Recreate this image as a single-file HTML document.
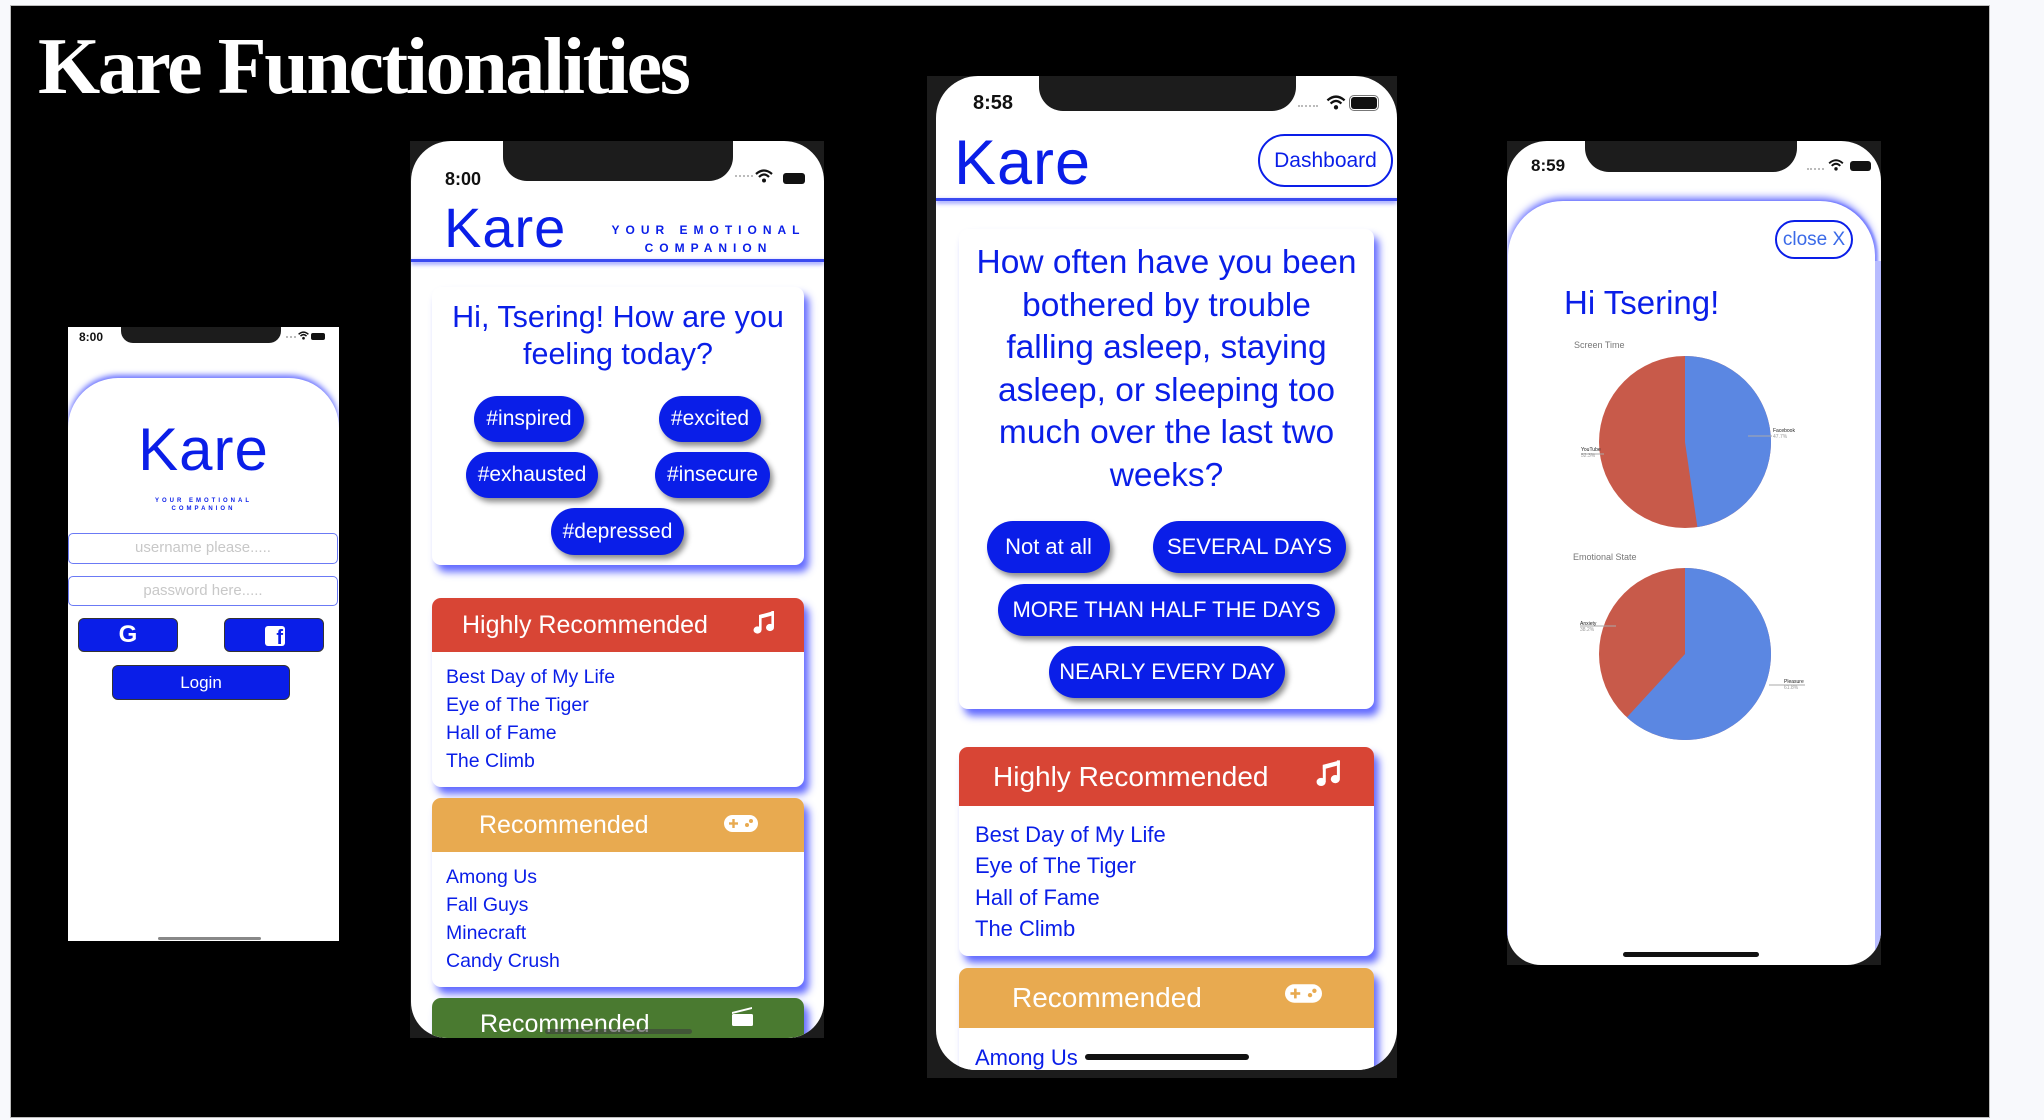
<!DOCTYPE html>
<html><head><meta charset="utf-8">
<style>
*{margin:0;padding:0;box-sizing:border-box}
body{width:2044px;height:1120px;background:#f8f9fc;position:relative;overflow:hidden;font-family:"Liberation Sans",sans-serif}
.abs{position:absolute}
.blk{left:11px;top:6px;width:1978px;height:1111px;background:#000;outline:1px solid #bbb}
.title{left:38px;top:22px;font-family:"Liberation Serif",serif;font-weight:bold;font-size:80px;color:#fff;letter-spacing:-2.4px;white-space:nowrap}
.frame{background:#1c1c1c}
.scr{background:#fff;overflow:hidden}
.blue{color:#0a1ee8}
.logo{font-family:"DejaVu Sans ExtraLight","Liberation Sans",sans-serif;font-weight:200}
.notch{background:#1c1c1c;border-radius:0 0 24px 24px}
.st{font-weight:bold;color:#111}
.card{background:#fff;border-radius:9px;box-shadow:5px 7px 8px rgba(70,80,255,.85);overflow:hidden}
.pill{position:absolute;background:#0a1ee8;color:#fff;border-radius:30px;display:flex;align-items:center;justify-content:center;box-shadow:3px 4px 6px rgba(0,0,0,.45);white-space:nowrap}
.hdr{position:absolute;left:0;top:0;width:100%;color:#fff;display:flex;align-items:center}
.item{position:absolute;color:#0a1ee8;white-space:nowrap}
.line{background:#3a4af0;box-shadow:0 2px 4px rgba(60,70,255,.7)}
</style></head><body>
<div class="abs blk"></div>
<div class="abs title">Kare Functionalities</div>

<!-- PHONE 1 -->
<div class="abs scr" style="left:68px;top:327px;width:271px;height:614px">
  <div class="abs st" style="left:11px;top:3px;font-size:12px">8:00</div>
  <div class="abs notch" style="left:53px;top:0;width:160px;height:16px;border-radius:0 0 12px 12px"></div>
  <div class="abs" style="left:218px;top:9px;width:10px;height:2px;border-top:2px dotted #bbb"></div>
  <svg class="abs" style="left:230px;top:4px" width="11" height="9" viewBox="0 0 18 14"><path d="M1 5 Q9 -2 17 5" stroke="#111" stroke-width="2.5" fill="none"/><path d="M4 8 Q9 3 14 8" stroke="#111" stroke-width="2.5" fill="none"/><circle cx="9" cy="11.5" r="2.2" fill="#111"/></svg>
  <div class="abs" style="left:243px;top:6px;width:14px;height:7px;background:#111;border-radius:2px"></div>
  <div class="abs" style="left:0;top:51px;width:271px;height:600px;border-radius:50px 50px 0 0;box-shadow:0 -3px 6px rgba(70,80,255,.8)"></div>
  <div class="abs blue logo" style="left:0;width:271px;text-align:center;top:88px;font-size:60px;line-height:70px;letter-spacing:1px">Kare</div>
  <div class="abs blue" style="left:0;width:271px;text-align:center;top:170px;font-size:6px;font-weight:bold;letter-spacing:3px;line-height:8px">YOUR EMOTIONAL<br>COMPANION</div>
  <div class="abs" style="left:0;top:206px;width:270px;height:31px;border:1.5px solid #6b7af5;border-radius:5px;color:#c8c8c8;font-size:15px;text-align:center;line-height:28px">username please.....</div>
  <div class="abs" style="left:0;top:249px;width:270px;height:30px;border:1.5px solid #6b7af5;border-radius:5px;color:#c8c8c8;font-size:15px;text-align:center;line-height:27px">password here.....</div>
  <div class="abs" style="left:10px;top:291px;width:100px;height:34px;background:#0a1ee8;border:1px solid #333;border-radius:6px;color:#fff;font-weight:bold;font-size:24px;text-align:center;line-height:32px">G</div>
  <div class="abs" style="left:156px;top:291px;width:100px;height:34px;background:#0a1ee8;border:1px solid #333;border-radius:6px">
    <div class="abs" style="left:40px;top:7px;width:20px;height:20px;background:#fff;border-radius:3px;color:#0a1ee8;font-weight:bold;font-size:20px;line-height:24px;text-align:right;padding-right:2px;overflow:hidden">f</div>
  </div>
  <div class="abs" style="left:44px;top:338px;width:178px;height:35px;background:#0a1ee8;border:1px solid #333;border-radius:6px;color:#fff;font-size:17px;text-align:center;line-height:33px">Login</div>
  <div class="abs" style="left:90px;top:610px;width:103px;height:3px;background:#888;border-radius:2px"></div>
</div>

<!-- PHONE 2 -->
<div class="abs frame" style="left:410px;top:141px;width:414px;height:897px"></div>
<div class="abs scr" style="left:411px;top:141px;width:413px;height:897px;border-radius:40px 40px 36px 36px">
  <div class="abs st" style="left:34px;top:28px;font-size:18px">8:00</div>
  <div class="abs notch" style="left:92px;top:0;width:230px;height:40px"></div>
  <div class="abs" style="left:324px;top:34px;width:18px;height:3px;border-top:2px dotted #bbb"></div>
  <svg class="abs" style="left:344px;top:28px" width="18" height="14" viewBox="0 0 18 14"><path d="M1 5 Q9 -2 17 5" stroke="#111" stroke-width="2.2" fill="none"/><path d="M4 8 Q9 3 14 8" stroke="#111" stroke-width="2.2" fill="none"/><circle cx="9" cy="11.5" r="2" fill="#111"/></svg>
  <div class="abs" style="left:372px;top:32px;width:22px;height:11px;background:#111;border-radius:3px"></div>
  <div class="abs blue logo" style="left:33px;top:51px;font-size:56px;line-height:72px;letter-spacing:1px">Kare</div>
  <div class="abs blue" style="left:200px;top:80px;width:195px;text-align:center;font-size:12px;font-weight:bold;letter-spacing:6px;line-height:18px">YOUR EMOTIONAL<br>COMPANION</div>
  <div class="abs line" style="left:0;top:118px;width:413px;height:3px"></div>
  <div class="abs card" style="left:21px;top:146px;width:372px;height:278px">
    <div class="abs blue" style="left:0;top:12px;width:372px;text-align:center;font-size:30.5px;line-height:37px">Hi, Tsering! How are you<br>feeling today?</div>
    <div class="pill" style="left:42px;top:109px;width:110px;height:46px;font-size:21px">#inspired</div>
    <div class="pill" style="left:227px;top:109px;width:102px;height:46px;font-size:21px">#excited</div>
    <div class="pill" style="left:34px;top:165px;width:132px;height:46px;font-size:21px">#exhausted</div>
    <div class="pill" style="left:223px;top:165px;width:115px;height:46px;font-size:21px">#insecure</div>
    <div class="pill" style="left:119px;top:221px;width:133px;height:47px;font-size:21px">#depressed</div>
  </div>
  <div class="abs card" style="left:21px;top:457px;width:372px;height:189px">
    <div class="hdr" style="height:54px;background:#d84535;font-size:25px;padding-left:30px">Highly Recommended</div>
    <svg class="abs" style="left:321px;top:12px" width="22" height="26" viewBox="0 0 22 26"><path d="M6 5 L21 1 L21 5 L6 9 Z" fill="#fff"/><rect x="6" y="5" width="2.6" height="15" fill="#fff"/><rect x="18.4" y="1" width="2.6" height="16" fill="#fff"/><ellipse cx="4.5" cy="20" rx="4" ry="3.6" fill="#fff"/><ellipse cx="17" cy="17.5" rx="4" ry="3.6" fill="#fff"/></svg>
    <div class="item" style="left:14px;top:68px;font-size:19.5px">Best Day of My Life</div>
    <div class="item" style="left:14px;top:96px;font-size:19.5px">Eye of The Tiger</div>
    <div class="item" style="left:14px;top:124px;font-size:19.5px">Hall of Fame</div>
    <div class="item" style="left:14px;top:152px;font-size:19.5px">The Climb</div>
  </div>
  <div class="abs card" style="left:21px;top:657px;width:372px;height:189px">
    <div class="hdr" style="height:54px;background:#e8aa50;font-size:25px;padding-left:47px">Recommended</div>
    <svg class="abs" style="left:292px;top:17px" width="34" height="17" viewBox="0 0 34 17"><rect x="0" y="0" width="34" height="17" rx="8.5" fill="#fff"/><rect x="5" y="7.3" width="9" height="2.4" fill="#e8aa50"/><rect x="8.3" y="4" width="2.4" height="9" fill="#e8aa50"/><circle cx="23" cy="10" r="2" fill="#e8aa50"/><circle cx="27" cy="6" r="2" fill="#e8aa50"/></svg>
    <div class="item" style="left:14px;top:68px;font-size:19.5px">Among Us</div>
    <div class="item" style="left:14px;top:96px;font-size:19.5px">Fall Guys</div>
    <div class="item" style="left:14px;top:124px;font-size:19.5px">Minecraft</div>
    <div class="item" style="left:14px;top:152px;font-size:19.5px">Candy Crush</div>
  </div>
  <div class="abs card" style="left:21px;top:857px;width:372px;height:100px">
    <div class="hdr" style="height:54px;background:#4a7a30;font-size:25px;padding-left:48px;align-items:flex-start;padding-top:12px">Recommended</div>
    <svg class="abs" style="left:299px;top:8px" width="22" height="20" viewBox="0 0 22 20"><path d="M1 6 L21 1 L21 3 L1 8 Z" fill="#fff"/><rect x="1" y="8" width="21" height="12" rx="1.5" fill="#fff"/></svg>
  </div>
  <div class="abs" style="left:134px;top:888px;width:147px;height:5px;background:rgba(60,60,60,.6);border-radius:3px"></div>
</div>

<!-- PHONE 3 -->
<div class="abs frame" style="left:927px;top:76px;width:470px;height:1002px"></div>
<div class="abs scr" style="left:936px;top:76px;width:461px;height:994px;border-radius:42px 42px 40px 40px">
  <div class="abs st" style="left:37px;top:16px;font-size:20px">8:58</div>
  <div class="abs notch" style="left:103px;top:0;width:257px;height:35px"></div>
  <div class="abs" style="left:362px;top:29px;width:20px;height:3px;border-top:2px dotted #bbb"></div>
  <svg class="abs" style="left:390px;top:19px" width="20" height="15" viewBox="0 0 18 14"><path d="M1 5 Q9 -2 17 5" stroke="#111" stroke-width="2.2" fill="none"/><path d="M4 8 Q9 3 14 8" stroke="#111" stroke-width="2.2" fill="none"/><circle cx="9" cy="11.5" r="2" fill="#111"/></svg>
  <div class="abs" style="left:415px;top:21px;width:26px;height:12px;background:#111;border-radius:3px;outline:1px solid #777;outline-offset:1px"></div>
  <div class="abs blue logo" style="left:18px;top:46px;font-size:63px;line-height:82px;letter-spacing:1px">Kare</div>
  <div class="abs blue" style="left:322px;top:58px;width:135px;height:53px;border:2px solid #0a1ee8;border-radius:27px;font-size:21px;text-align:center;line-height:49px">Dashboard</div>
  <div class="abs line" style="left:0;top:122px;width:461px;height:3px"></div>
  <div class="abs card" style="left:23px;top:153px;width:415px;height:480px">
    <div class="abs blue" style="left:0;top:13px;width:415px;text-align:center;font-size:33.5px;line-height:42.6px;white-space:nowrap">How often have you been<br>bothered by trouble<br>falling asleep, staying<br>asleep, or sleeping too<br>much over the last two<br>weeks?</div>
    <div class="pill" style="left:28px;top:292px;width:123px;height:52px;font-size:22px">Not at all</div>
    <div class="pill" style="left:194px;top:292px;width:193px;height:52px;font-size:22px">SEVERAL DAYS</div>
    <div class="pill" style="left:39px;top:355px;width:337px;height:52px;font-size:22px">MORE THAN HALF THE DAYS</div>
    <div class="pill" style="left:90px;top:417px;width:236px;height:52px;font-size:22px">NEARLY EVERY DAY</div>
  </div>
  <div class="abs card" style="left:23px;top:671px;width:415px;height:209px">
    <div class="hdr" style="height:59px;background:#d84535;font-size:28px;padding-left:34px">Highly Recommended</div>
    <svg class="abs" style="left:357px;top:12px" width="25" height="30" viewBox="0 0 22 26"><path d="M6 5 L21 1 L21 5 L6 9 Z" fill="#fff"/><rect x="6" y="5" width="2.6" height="15" fill="#fff"/><rect x="18.4" y="1" width="2.6" height="16" fill="#fff"/><ellipse cx="4.5" cy="20" rx="4" ry="3.6" fill="#fff"/><ellipse cx="17" cy="17.5" rx="4" ry="3.6" fill="#fff"/></svg>
    <div class="item" style="left:16px;top:75px;font-size:22px">Best Day of My Life</div>
    <div class="item" style="left:16px;top:106px;font-size:22px">Eye of The Tiger</div>
    <div class="item" style="left:16px;top:138px;font-size:22px">Hall of Fame</div>
    <div class="item" style="left:16px;top:169px;font-size:22px">The Climb</div>
  </div>
  <div class="abs card" style="left:23px;top:892px;width:415px;height:140px">
    <div class="hdr" style="height:60px;background:#e8aa50;font-size:28px;padding-left:53px">Recommended</div>
    <svg class="abs" style="left:326px;top:16px" width="37" height="19" viewBox="0 0 34 17"><rect x="0" y="0" width="34" height="17" rx="8.5" fill="#fff"/><rect x="5" y="7.3" width="9" height="2.4" fill="#e8aa50"/><rect x="8.3" y="4" width="2.4" height="9" fill="#e8aa50"/><circle cx="23" cy="10" r="2" fill="#e8aa50"/><circle cx="27" cy="6" r="2" fill="#e8aa50"/></svg>
    <div class="item" style="left:16px;top:77px;font-size:22px">Among Us</div>
  </div>
  <div class="abs" style="left:149px;top:978px;width:164px;height:6px;background:#111;border-radius:3px"></div>
</div>

<!-- PHONE 4 -->
<div class="abs frame" style="left:1507px;top:141px;width:374px;height:824px"></div>
<div class="abs scr" style="left:1507px;top:141px;width:374px;height:824px;border-radius:40px 40px 34px 34px">
  <div class="abs st" style="left:24px;top:15px;font-size:17px">8:59</div>
  <div class="abs notch" style="left:78px;top:0;width:212px;height:31px"></div>
  <div class="abs" style="left:300px;top:27px;width:17px;height:3px;border-top:2px dotted #bbb"></div>
  <svg class="abs" style="left:321px;top:18px" width="16" height="12" viewBox="0 0 18 14"><path d="M1 5 Q9 -2 17 5" stroke="#111" stroke-width="2.2" fill="none"/><path d="M4 8 Q9 3 14 8" stroke="#111" stroke-width="2.2" fill="none"/><circle cx="9" cy="11.5" r="2" fill="#111"/></svg>
  <div class="abs" style="left:343px;top:20px;width:21px;height:10px;background:#111;border-radius:3px"></div>
  <div class="abs" style="left:1px;top:60px;width:367px;height:800px;border-radius:55px 55px 0 0;box-shadow:0 -3px 8px rgba(70,80,255,.85),3px 0 2px rgba(120,130,255,.6)"></div>
  <div class="abs" style="left:368px;top:120px;width:6px;height:700px;background:#b8bcff"></div>
  <div class="abs" style="left:268px;top:79px;width:78px;height:39px;border:2px solid #0a1ee8;border-radius:20px;color:#3a6ae8;font-size:19px;text-align:center;line-height:35px">close X</div>
  <div class="abs blue" style="left:57px;top:140px;font-size:33px;line-height:44px">Hi Tsering!</div>
  <div class="abs" style="left:67px;top:199px;font-size:9px;color:#777">Screen Time</div>
  <svg class="abs" style="left:0;top:0" width="374" height="824">
    <circle cx="178" cy="301" r="86" fill="#c85a4a"/>
    <path d="M178,301 L178,215 A86,86 0 0 1 190.4,386.1 Z" fill="#5b87e2"/>
    <line x1="241" y1="295" x2="265" y2="295" stroke="#aaa" stroke-width="1"/>
    <line x1="74" y1="313" x2="97" y2="313" stroke="#aaa" stroke-width="1"/>
    <circle cx="178" cy="513" r="86" fill="#c85a4a"/>
    <path d="M178,513 L178,427 A86,86 0 1 1 119.9,576.4 Z" fill="#5b87e2"/>
    <line x1="73" y1="485" x2="109" y2="485" stroke="#aaa" stroke-width="1"/>
    <line x1="262" y1="544" x2="298" y2="544" stroke="#aaa" stroke-width="1"/>
  </svg>
  <div class="abs" style="left:266px;top:287px;font-size:5px;color:#222;line-height:6px">Facebook<br><span style="color:#999">47.7%</span></div>
  <div class="abs" style="left:74px;top:306px;font-size:5px;color:#222;line-height:6px">YouTube<br><span style="color:#999">52.3%</span></div>
  <div class="abs" style="left:66px;top:411px;font-size:9px;color:#777">Emotional State</div>
  <div class="abs" style="left:73px;top:480px;font-size:5px;color:#222;line-height:6px">Anxiety<br><span style="color:#999">38.2%</span></div>
  <div class="abs" style="left:277px;top:538px;font-size:5px;color:#222;line-height:6px">Pleasure<br><span style="color:#999">61.8%</span></div>
  <div class="abs" style="left:116px;top:811px;width:136px;height:5px;background:#111;border-radius:3px"></div>
</div>
</body></html>
